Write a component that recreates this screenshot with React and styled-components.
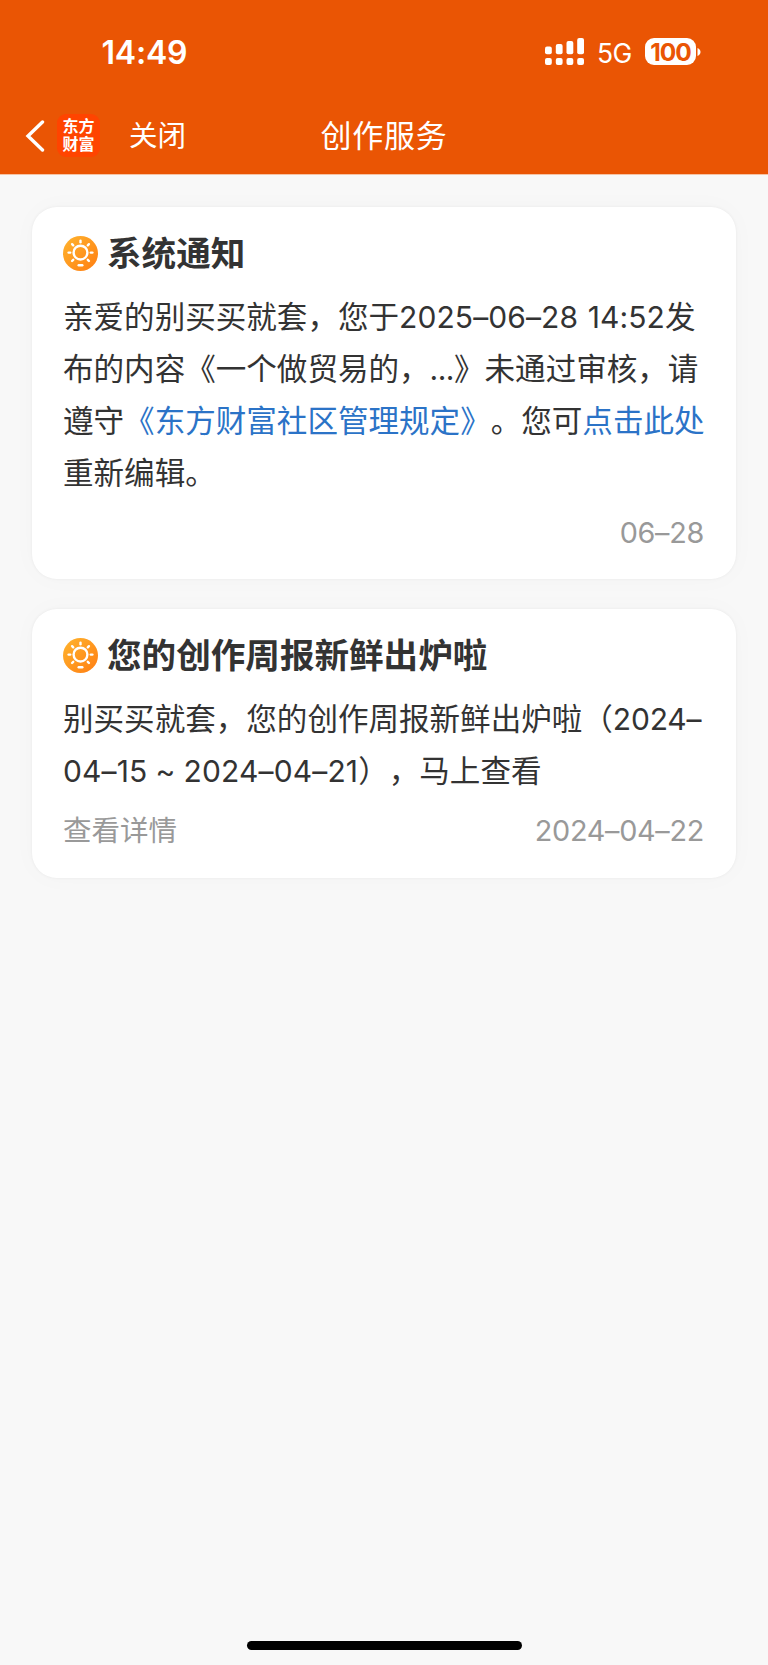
import styled, { createGlobalStyle } from 'styled-components';

const GlobalStyle = createGlobalStyle`
    * {
        box-sizing: border-box;
    }

    body {
        margin: 0;
        background: #f8f8f8;
        font-family: Inter, 'Noto Sans CJK SC', sans-serif;
        text-spacing-trim: space-all;
    }
`;

const Page = styled.div`
    display: flex;
    flex-direction: column;
    height: 1665px;
    background: #f8f8f8;
    overflow: hidden;
`;

const Header = styled.header`
    height: 174px;
    background: #ea5504;
    box-shadow: 0 1px 0 #f6c3a4;
    color: #fff;
`;

const StatusBar = styled.div`
    display: flex;
    justify-content: space-between;
    height: 104px;
    padding: 0 67px 0 101.5px;
`;

const Clock = styled.div`
    margin-top: 33px;
    font-size: 32px;
    line-height: 40px;
    font-weight: 600;
    letter-spacing: -0.2px;
`;

const StatusIcons = styled.div`
    display: flex;
    align-items: center;
    height: 27px;
    margin-top: 38px;
`;

const Network = styled.span`
    width: 61px;
    padding: 2px 0 0 13px;
    font-size: 26.5px;
    line-height: 28px;
    letter-spacing: -0.5px;
    white-space: nowrap;
`;

const Battery = styled.div`
    width: 51px;
    height: 27px;
    border-radius: 9px;
    background: #fff;
    color: #ea5504;
    font-size: 24.5px;
    font-weight: 700;
    line-height: 28px;
    letter-spacing: -1.1px;
    text-align: center;
`;

const NavBar = styled.nav`
    display: grid;
    grid-template-columns: 1fr auto 1fr;
    align-items: center;
    height: 64px;
`;

const NavLeft = styled.div`
    display: flex;
    align-items: center;
    padding-left: 25px;
`;

const AppLogo = styled.div`
    width: 43px;
    height: 43px;
    margin: -2px 29px 0 12px;
    padding-top: 2px;
    border-radius: 9px;
    background: #ff4400;
    font-family: 'Noto Sans CJK SC', sans-serif;
    font-size: 16px;
    font-weight: 700;
    line-height: 18px;
    text-align: center;
`;

const CloseButton = styled.span`
    font-size: 28.5px;
    line-height: 40px;
`;

const NavTitle = styled.h1`
    margin: 0;
    font-size: 31px;
    font-weight: 400;
    line-height: 40px;
    letter-spacing: 0.7px;
`;

const CardList = styled.main`
    display: flex;
    flex: 1;
    flex-direction: column;
    gap: 30px;
    padding: 33px 32px 0;
`;

const Card = styled.article`
    height: ${({ $height }) => $height}px;
    padding: 23px 0 0 31px;
    border-radius: 25px;
    background: #fff;
    box-shadow: 0 0 3px rgba(0, 0, 0, 0.06), 0 0 26px rgba(0, 0, 0, 0.025);
`;

const CardHeader = styled.div`
    display: flex;
    align-items: center;
    gap: 9px;
    height: 46px;
`;

const CardTitle = styled.h2`
    margin: 0;
    color: #333;
    font-size: 34.6px;
    font-weight: 700;
    line-height: 46px;
`;

const CardText = styled.div`
    margin-top: 13px;
    color: #333;
    font-size: 30.56px;
    line-height: 52px;
    white-space: nowrap;
`;

const Line = styled.div`
    height: 52px;
    font-family: 'Noto Sans CJK SC', sans-serif;
`;

const Latin = styled.span`
    font-family: Inter, sans-serif;
    font-size: 30px;
    letter-spacing: ${({ $spacing = 0 }) => $spacing}px;
    word-spacing: ${({ $gap = 0 }) => $gap}px;
`;

const Link = styled.span`
    color: #2b73c7;
`;

const CardFooter = styled.div`
    display: flex;
    justify-content: space-between;
    width: 641px;
    margin-top: 15px;
    color: #999;
    font-size: 28.5px;
    line-height: 42px;
`;

const Date = styled.span`
    margin-left: auto;
    font-size: 28.8px;
    letter-spacing: -0.3px;
`;

const HomeIndicator = styled.div`
    width: 275px;
    height: 9px;
    margin: 0 auto 15px;
    border-radius: 5px;
    background: #000;
`;

const SIGNAL_BARS = [
    { x: 0, y: 8.5 },
    { x: 10.8, y: 6 },
    { x: 21.5, y: 3 },
    { x: 32.2, y: 0 },
];

const SignalIcon = () => (
    <svg width="39" height="27" viewBox="0 0 39 27" fill="#fff">
        {SIGNAL_BARS.map(({ x, y }) => (
            <g key={x}>
                <rect x={x} y={y} width="6.8" height={16.3 - y} rx="2" />
                <rect x={x} y="20" width="6.8" height="7" rx="2" />
            </g>
        ))}
    </svg>
);

const BatteryTip = () => (
    <svg width="5" height="10" viewBox="0 0 5 10">
        <path d="M1.5 1C5.5 2.5 5.5 7.5 1.5 9Z" fill="#fff" />
    </svg>
);

const BackIcon = () => (
    <svg width="20" height="32" viewBox="0 0 20 32">
        <path
            d="M17.5 2 3 16l14.5 14"
            fill="none"
            stroke="#fff"
            strokeWidth="3.4"
            strokeLinecap="round"
        />
    </svg>
);

const RAYS = [-135, -90, -45, 0, 45, 135, 180];

const SunIcon = () => (
    <svg width="35" height="35" viewBox="0 0 35 35">
        <defs>
            <linearGradient id="sun" x1="0" y1="0" x2="1" y2="1">
                <stop offset="0" stopColor="#ffb52e" />
                <stop offset="1" stopColor="#ff7d12" />
            </linearGradient>
        </defs>
        <circle cx="17.5" cy="17.5" r="17.5" fill="url(#sun)" />
        <g fill="none" stroke="#fff" strokeWidth="2.4" strokeLinecap="round">
            <circle cx="17.5" cy="16.6" r="6.9" />
            {RAYS.map((angle) => (
                <path key={angle} d="M27.8 16.6h1.6" transform={`rotate(${angle} 17.5 16.6)`} />
            ))}
            <path d="M15.7 29.2h3.6" />
        </g>
    </svg>
);

const NoticeCard = ({ title, height, date, action, children }) => (
    <Card $height={height}>
        <CardHeader>
            <SunIcon />
            <CardTitle>{title}</CardTitle>
        </CardHeader>
        <CardText>{children}</CardText>
        <CardFooter>
            {action && <span>{action}</span>}
            <Date>{date}</Date>
        </CardFooter>
    </Card>
);

const App = () => (
    <>
        <GlobalStyle />
        <Page>
            <Header>
                <StatusBar>
                    <Clock>14:49</Clock>
                    <StatusIcons>
                        <SignalIcon />
                        <Network>5G</Network>
                        <Battery>100</Battery>
                        <BatteryTip />
                    </StatusIcons>
                </StatusBar>
                <NavBar>
                    <NavLeft>
                        <BackIcon />
                        <AppLogo>
                            东方
                            <br />
                            财富
                        </AppLogo>
                        <CloseButton>关闭</CloseButton>
                    </NavLeft>
                    <NavTitle>创作服务</NavTitle>
                </NavBar>
            </Header>
            <CardList>
                <NoticeCard title="系统通知" height={372} date="06–28">
                    <Line>
                        亲爱的别买买就套，您于<Latin $spacing={0.1} $gap={1}>2025–06–28 14:52</Latin>发
                    </Line>
                    <Line>
                        布的内容《一个做贸易的，<Latin $spacing={-0.5}>...</Latin>》未通过审核，请
                    </Line>
                    <Line>
                        遵守<Link>《东方财富社区管理规定》</Link>。您可<Link>点击此处</Link>
                    </Line>
                    <Line>重新编辑。</Line>
                </NoticeCard>
                <NoticeCard
                    title="您的创作周报新鲜出炉啦"
                    height={269}
                    date="2024–04–22"
                    action="查看详情"
                >
                    <Line>
                        别买买就套，您的创作周报新鲜出炉啦（<Latin $spacing={-0.2}>2024–</Latin>
                    </Line>
                    <Line>
                        <Latin $spacing={0.15} $gap={-0.6}>04–15 ~ 2024–04–21</Latin>），马上查看
                    </Line>
                </NoticeCard>
            </CardList>
            <HomeIndicator />
        </Page>
    </>
);

export default App;
